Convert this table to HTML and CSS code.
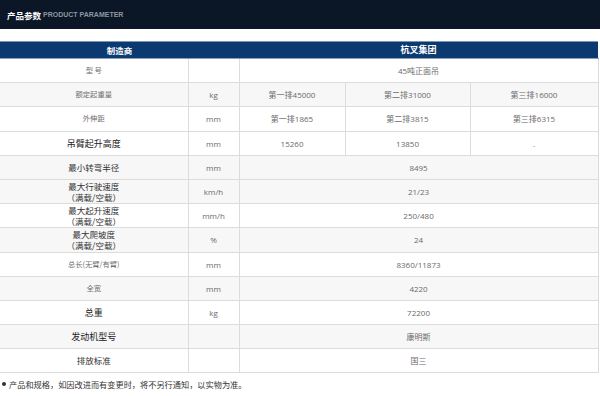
FILE: index.html
```html
<!DOCTYPE html>
<html lang="zh">
<head>
<meta charset="utf-8">
<title>产品参数</title>
<link rel="stylesheet" href="styles.css">
</head>
<body>
<div class="topbar"><span class="tb-cn">产品参数</span><span class="tb-en">PRODUCT PARAMETER</span></div>
<table class="spec">
  <colgroup>
    <col class="c1"><col class="c2"><col class="c3"><col class="c4"><col class="c5">
  </colgroup>
  <thead>
    <tr class="head"><th colspan="2">制造商</th><th colspan="3" class="wide">杭叉集团</th></tr>
  </thead>
  <tbody>
    <tr><td class="lbl">型 号</td><td></td><td colspan="3">45吨正面吊</td></tr>
    <tr class="alt"><td class="lbl">额定起重量</td><td>kg</td><td>第一排45000</td><td>第二排31000</td><td>第三排16000</td></tr>
    <tr><td class="lbl">外伸距</td><td>mm</td><td>第一排1865</td><td>第二排3815</td><td>第三排6315</td></tr>
    <tr><td class="lbl big">吊臂起升高度</td><td>mm</td><td>15260</td><td>13850</td><td>.</td></tr>
    <tr class="alt"><td class="lbl mid">最小转弯半径</td><td>mm</td><td colspan="3">8495</td></tr>
    <tr class="alt"><td class="lbl mid two">最大行驶速度<br>（满载/空载）</td><td>km/h</td><td colspan="3">21/23</td></tr>
    <tr><td class="lbl mid two">最大起升速度<br>（满载/空载）</td><td>mm/h</td><td colspan="3">250/480</td></tr>
    <tr class="alt"><td class="lbl mid two">最大爬坡度<br>（满载/空载）</td><td>%</td><td colspan="3">24</td></tr>
    <tr><td class="lbl">总长(无臂/有臂)</td><td>mm</td><td colspan="3">8360/11873</td></tr>
    <tr class="alt"><td class="lbl">全宽</td><td>mm</td><td colspan="3">4220</td></tr>
    <tr><td class="lbl big">总重</td><td>kg</td><td colspan="3">72200</td></tr>
    <tr class="alt"><td class="lbl big">发动机型号</td><td></td><td colspan="3">康明斯</td></tr>
    <tr><td class="lbl mid">排放标准</td><td></td><td colspan="3">国三</td></tr>
  </tbody>
</table>
<p class="note"><span class="dot"></span>产品和规格，如因改进而有变更时，将不另行通知，以实物为准。</p>
</body>
</html>
```
FILE: styles.css
```css
html, body {
  margin: 0;
  padding: 0;
  background: #ffffff;
}
body {
  width: 600px;
  font-family: "Open Sans", "Noto Sans CJK SC", sans-serif;
}
.topbar {
  height: 29px;
  background: #0b1727;
  display: flex;
  align-items: center;
  padding-left: 7px;
  margin-bottom: 12px;
}
.tb-cn {
  font-family: "Noto Sans CJK SC", sans-serif;
  color: #ffffff;
  font-size: 8.5px;
  font-weight: 700;
  margin-right: 2px;
}
.tb-en {
  font-family: "Liberation Sans", Arial, sans-serif;
  color: #8d96a2;
  font-size: 7px;
  font-weight: 700;
}
.spec {
  border-collapse: collapse;
  width: 598px;
  table-layout: fixed;
  margin: 0;
}
.c1 { width: 188px; }
.c2 { width: 51px; }
.c3 { width: 106px; }
.c4 { width: 125px; }
.c5 { width: 128px; }
.spec th {
  background: #0b3a70;
  color: #ffffff;
  font-family: "Noto Sans CJK SC", sans-serif;
  font-size: 8.5px;
  font-weight: 700;
  height: 16px;
  padding: 0;
  border-top: 1px solid #7d96b5;
  border-bottom: 1px solid #8aa0bb;
  line-height: 16px;
}
.spec th.wide {
  font-size: 9px;
}
.spec td {
  border: 1px solid #dcdcdc;
  border-left: none;
  height: 23.2px;
  padding: 0;
  text-align: center;
  font-size: 8px;
  color: #6a6a6a;
  line-height: 11px;
  font-family: "Open Sans", "Noto Sans CJK SC", sans-serif;
}
.spec td:last-child {
  border-right: 1px solid #dcdcdc;
}
.spec tr.alt td {
  background: #f7f7f7;
}
.spec td.lbl {
  font-family: "Noto Sans CJK SC", sans-serif;
  font-size: 7.3px;
  color: #707070;
}
.spec td.mid {
  font-size: 8.5px;
  color: #333333;
}
.spec td.big {
  font-size: 9px;
  color: #222222;
}
.spec td.two {
  line-height: 11px;
}
.note {
  margin: 5px 0 0 2px;
  font-family: "Noto Sans CJK SC", sans-serif;
  font-size: 8.2px;
  color: #333333;
  line-height: 12px;
  display: flex;
  align-items: center;
}
.dot {
  width: 4px;
  height: 4px;
  border-radius: 50%;
  background: #333333;
  margin-right: 3px;
}
```
